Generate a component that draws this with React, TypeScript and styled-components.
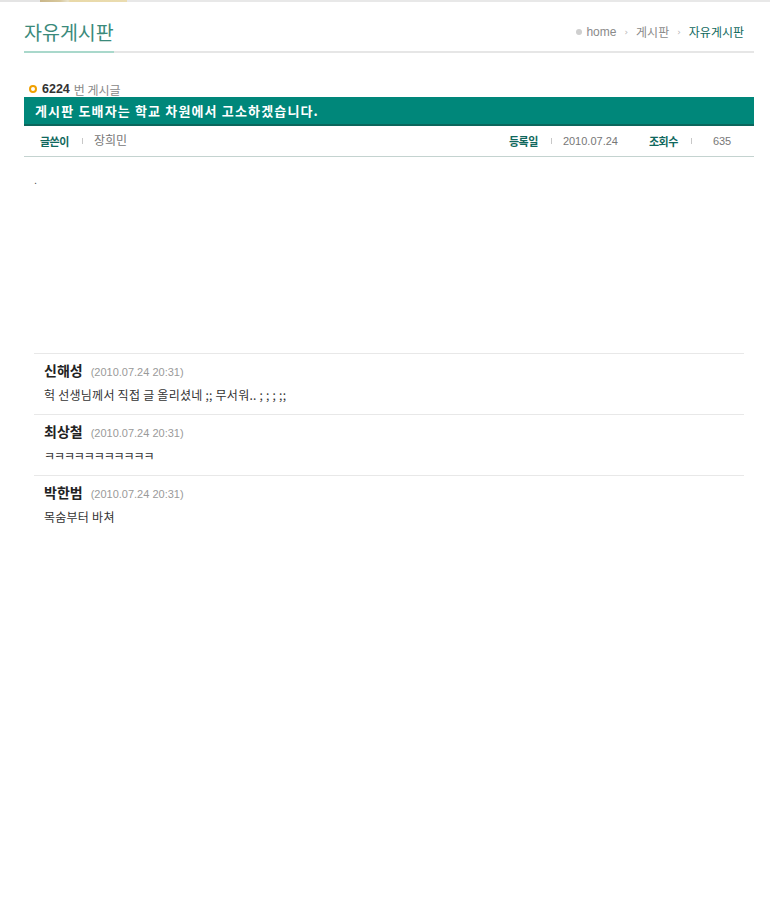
import React from "react";
import styled, { createGlobalStyle } from "styled-components";

const Global = createGlobalStyle`
  html, body { margin: 0; padding: 0; background: #fff; }
  body { font-family: "Liberation Sans", "Noto Sans CJK KR", sans-serif; color: #333; }
`;

const TopStrip = styled.div`
  height: 2px;
  background: linear-gradient(to right, #e4e4e4 0, #e4e4e4 40px, #c9b68a 40px, #d8c89c 60px, #e8e2cc 68px, #e9d9a8 70px, #eadcb0 127px, #e8e8e8 127px, #e8e8e8 770px, #fff 770px);
`;

const Page = styled.div`
  width: 730px;
  margin-left: 24px;
`;

const Header = styled.div`
  display: flex;
  align-items: flex-end;
  justify-content: space-between;
  height: 49px;
  border-bottom: 2px solid #e6e6e6;
  position: relative;
`;

const Title = styled.h1`
  margin: 0;
  font-family: "Noto Sans CJK KR", sans-serif;
  font-size: 19.5px;
  font-weight: 400;
  color: #3b8a7b;
  line-height: 1;
  padding: 0 0 10px 0;
  position: relative;
  &::after {
    content: "";
    position: absolute;
    left: 0;
    right: 0;
    bottom: -2px;
    height: 2px;
    background: #a9d8cb;
  }
`;

const Crumbs = styled.div`
  display: flex;
  align-items: center;
  gap: 8px;
  padding: 0 10px 11px 0;
  font-size: 12px;
  color: #888;
`;

const Crumb = styled.span<{ $current?: boolean }>`
  display: inline-flex;
  align-items: center;
  gap: 4px;
  color: ${(p) => (p.$current ? "#10685d" : "#8a8a8a")};
  font-family: "Noto Sans CJK KR", sans-serif;
`;

const HomeText = styled.span`
  font-family: "Liberation Sans", sans-serif;
  font-size: 12px;
  color: #8a8a8a;
`;

const Dot = styled.span`
  display: inline-block;
  width: 6px;
  height: 6px;
  border-radius: 50%;
  background: #cfcfcf;
`;

const Arrow = styled.span`
  font-size: 9px;
  color: #b5b5b5;
  font-family: "DejaVu Sans", sans-serif;
`;

const NumberRow = styled.div`
  display: flex;
  align-items: center;
  margin-top: 29px;
  padding-left: 5px;
  height: 14px;
  font-size: 12px;
  gap: 4px;
`;

const Ring = styled.span`
  width: 4px;
  height: 4px;
  border: 2px solid #f0a000;
  border-radius: 50%;
  margin-right: 1px;
`;

const Num = styled.b`
  font-family: "Liberation Sans", sans-serif;
  font-size: 12.5px;
  color: #333;
`;

const NumLabel = styled.span`
  font-family: "Noto Sans CJK KR", sans-serif;
  font-size: 12px;
  color: #888;
`;

const Bar = styled.div`
  margin-top: 1px;
  height: 27px;
  background: #00877a;
  border-bottom: 2px solid #0b665c;
  display: flex;
  align-items: center;
  padding-left: 11px;
  color: #fff;
  font-family: "Noto Sans CJK KR", sans-serif;
  font-weight: 700;
  font-size: 13px;
  letter-spacing: 1.15px;
`;

const Info = styled.div`
  display: flex;
  align-items: center;
  height: 30px;
  border-bottom: 1px solid #c4d3d0;
  font-size: 11px;
`;

const Field = styled.div<{ $push?: boolean; $w?: number; $indent?: number }>`
  display: flex;
  align-items: center;
  margin-left: ${(p) => (p.$push ? "auto" : "0")};
  padding-left: ${(p) => p.$indent ?? 0}px;
  width: ${(p) => (p.$w ? `${p.$w}px` : "auto")};
`;

const Label = styled.span`
  font-family: "Noto Sans CJK KR", sans-serif;
  font-weight: 700;
  font-size: 11px;
  color: #10685d;
  letter-spacing: -0.5px;
`;

const Sep = styled.span<{ $after?: number }>`
  display: inline-block;
  width: 1px;
  height: 6px;
  background: #c8c8c8;
  margin: 0 ${(p) => p.$after ?? 11}px 0 13px;
`;

const Value = styled.span<{ $cjk?: boolean }>`
  font-family: ${(p) => (p.$cjk ? '"Noto Sans CJK KR", sans-serif' : '"Liberation Sans", sans-serif')};
  font-size: ${(p) => (p.$cjk ? "12px" : "11px")};
  color: #777;
  margin-top: ${(p) => (p.$cjk ? "-3px" : "0")};
`;

const Content = styled.div`
  height: 196px;
  padding: 17px 0 0 10px;
  box-sizing: border-box;
  font-size: 11px;
  color: #555;
`;

const Comments = styled.div`
  margin: 0 10px;
  border-top: 1px solid #e8e8e8;
`;

const Comment = styled.div<{ $last?: boolean }>`
  height: 61px;
  box-sizing: border-box;
  padding: 6px 0 0 10px;
  border-bottom: 1px solid ${(p) => (p.$last ? "transparent" : "#e8e8e8")};
`;

const CommentHead = styled.div`
  display: flex;
  align-items: baseline;
  gap: 8px;
  height: 18px;
`;

const Name = styled.b`
  font-family: "Noto Sans CJK KR", sans-serif;
  font-size: 14px;
  font-weight: 700;
  color: #222;
`;

const When = styled.span`
  font-family: "Liberation Sans", sans-serif;
  font-size: 11px;
  color: #9a9a9a;
`;

const Body = styled.div<{ $tracking: number }>`
  margin-top: 8px;
  font-family: "Noto Sans CJK KR", sans-serif;
  font-size: 12px;
  color: #333;
  letter-spacing: ${(p) => p.$tracking}px;
`;

const comments = [
  { name: "신해성", date: "(2010.07.24 20:31)", text: "헉 선생님께서 직접 글 올리셨네 ;; 무서워.. ; ; ; ;;", tracking: 0.25 },
  { name: "최상철", date: "(2010.07.24 20:31)", text: "ㅋㅋㅋㅋㅋㅋㅋㅋㅋㅋㅋ", tracking: -1.1 },
  { name: "박한범", date: "(2010.07.24 20:31)", text: "목숨부터 바쳐", tracking: 0.25 },
];

export default function App() {
  return (
    <>
      <Global />
      <TopStrip />
      <Page>
        <Header>
          <Title>자유게시판</Title>
          <Crumbs>
            <Crumb>
              <Dot />
              <HomeText>home</HomeText>
            </Crumb>
            <Arrow>›</Arrow>
            <Crumb>게시판</Crumb>
            <Arrow>›</Arrow>
            <Crumb $current>자유게시판</Crumb>
          </Crumbs>
        </Header>
        <NumberRow>
          <Ring />
          <Num>6224</Num>
          <NumLabel>번 게시글</NumLabel>
        </NumberRow>
        <Bar>게시판 도배자는 학교 차원에서 고소하겠습니다.</Bar>
        <Info>
          <Field $indent={16}>
            <Label>글쓴이</Label>
            <Sep />
            <Value $cjk>장희민</Value>
          </Field>
          <Field $push $w={140}>
            <Label>등록일</Label>
            <Sep />
            <Value>2010.07.24</Value>
          </Field>
          <Field $w={105}>
            <Label>조회수</Label>
            <Sep $after={21} />
            <Value>635</Value>
          </Field>
        </Info>
        <Content>.</Content>
        <Comments>
          {comments.map((c, i) => (
            <Comment key={c.name} $last={i === comments.length - 1}>
              <CommentHead>
                <Name>{c.name}</Name>
                <When>{c.date}</When>
              </CommentHead>
              <Body $tracking={c.tracking}>{c.text}</Body>
            </Comment>
          ))}
        </Comments>
      </Page>
    </>
  );
}
